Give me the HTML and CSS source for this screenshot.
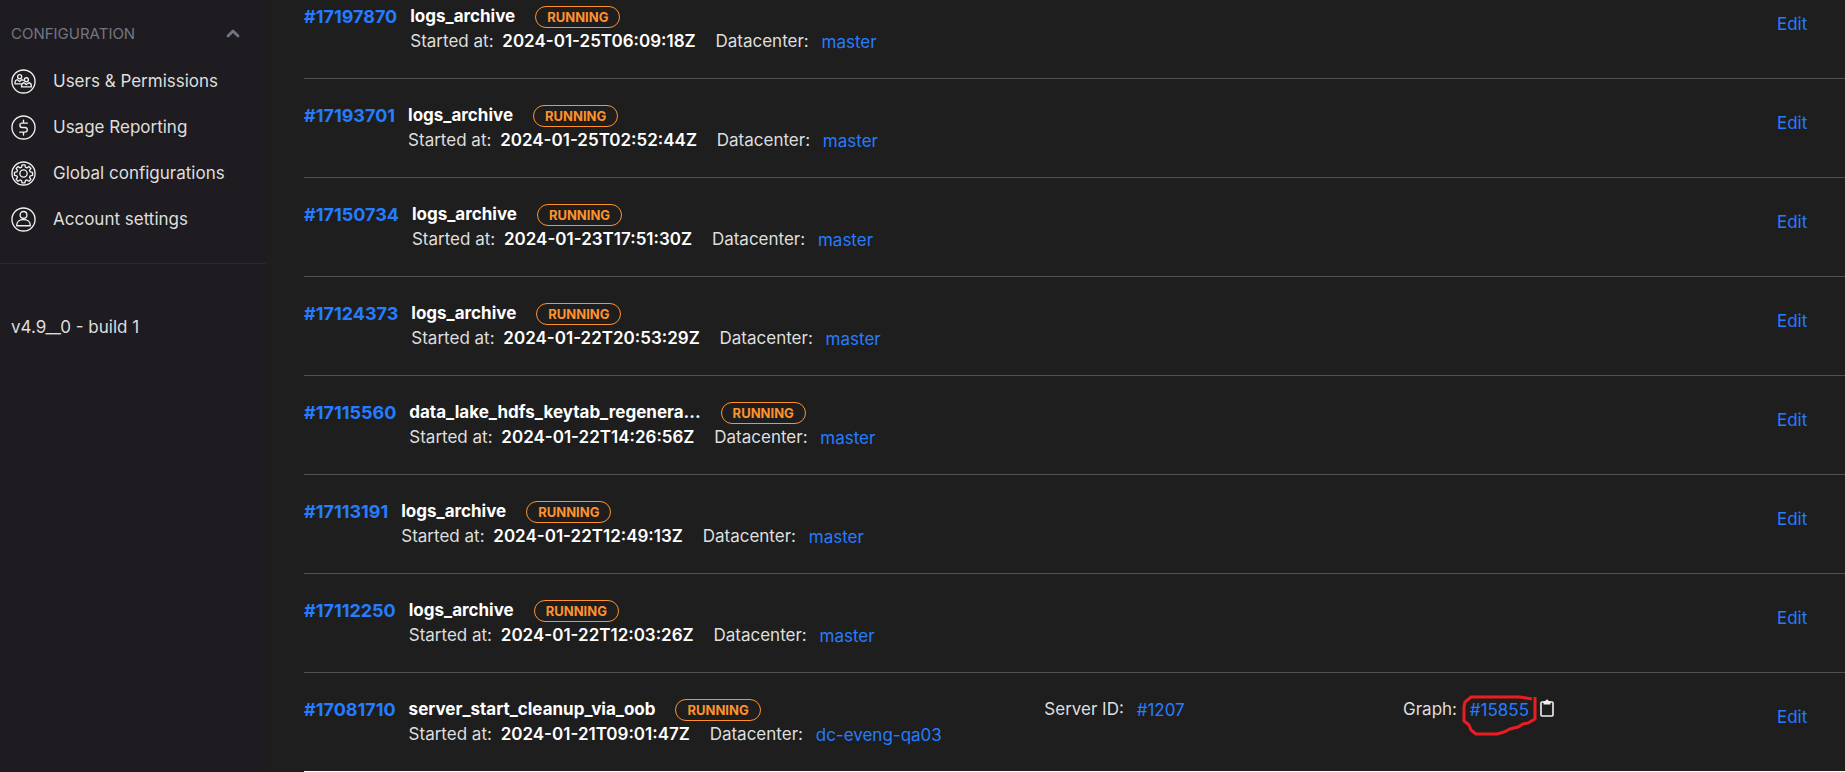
FILE: index.html
```
<!DOCTYPE html>
<html lang="en">
<head>
  <meta charset="utf-8">
  <title>Jobs</title>
  <link rel="stylesheet" href="styles.css">
</head>
<body>
  <aside class="sidebar">
    <button class="section-toggle" type="button">
      <span>CONFIGURATION</span>
      <svg width="14" height="9" viewBox="0 0 14 9"><path d="M2 7l5-5 5 5" fill="none" stroke="currentColor" stroke-width="2.8" stroke-linecap="round" stroke-linejoin="round"/></svg>
    </button>
    <nav class="menu">
      <a href="#">
        <svg class="icon" viewBox="0 0 26 26">
          <circle cx="13" cy="13" r="12"/>
          <circle cx="9" cy="8" r="2.1"/>
          <path d="M10.5 15.5H4.2v-1.7c0-1.500.8-2.300 2.200-2.700L9 13l2.200-1.900 1.500.8"/>
          <circle cx="16" cy="11.200" r="2.100"/>
          <path d="M11 18.600V17c0-1.500.8-2.300 2.300-2.700L16 16.200l2.600-1.900c1.600.4 2.500 1.200 2.500 2.700v1.600z"/>
        </svg>
        Users &amp; Permissions
      </a>
      <a href="#">
        <svg class="icon" viewBox="0 0 26 26">
          <circle cx="13" cy="13" r="12"/>
          <path d="M17 8.500h-5.500a2.250 2.250 0 0 0 0 4.500h3a2.400 2.400 0 0 1 0 4.800H9M13 5.500v3M13 17.800v3"/>
        </svg>
        Usage Reporting
      </a>
      <a href="#">
        <svg class="icon" viewBox="0 0 26 26">
          <circle cx="13" cy="13" r="12"/>
          <circle cx="13" cy="13" r="3.800"/>
          <path d="M11.500 4h3l.5 2.400 1.600.7 2.100-1.400 2 2-1.400 2.100.7 1.600 2.400.5v3l-2.400.5-.7 1.600 1.400 2.100-2 2-2.100-1.400-1.600.7-.5 2.400h-3l-.5-2.400-1.600-.7-2.100 1.400-2-2 1.400-2.100-.7-1.600-2.400-.5v-3l2.400-.5.7-1.600-1.400-2.100 2-2 2.100 1.400 1.600-.7z"/>
        </svg>
        Global configurations
      </a>
      <a href="#">
        <svg class="icon" viewBox="0 0 26 26">
          <circle cx="13" cy="13" r="12"/>
          <circle cx="13" cy="8.200" r="3.500"/>
          <path d="M6 19.500v-1c0-3.300 3-5.500 7-5.500s7 2.200 7 5.500v1z"/>
        </svg>
        Account settings
      </a>
    </nav>
    <p class="version">v4.9__0 - build 1</p>
  </aside>

  <main class="jobs">
    <article class="job">
      <div class="job-main">
        <a class="job-id" href="#">#17197870</a>
        <div>
          <div class="job-title"><strong>logs_archive</strong><span class="badge">RUNNING</span></div>
          <div class="job-meta">Started at: <b>2024-01-25T06:09:18Z</b> <span>Datacenter:</span> <a href="#">master</a></div>
        </div>
      </div>
      <a class="edit" href="#">Edit</a>
    </article>
    <article class="job">
      <div class="job-main">
        <a class="job-id" href="#">#17193701</a>
        <div>
          <div class="job-title"><strong>logs_archive</strong><span class="badge">RUNNING</span></div>
          <div class="job-meta">Started at: <b>2024-01-25T02:52:44Z</b> <span>Datacenter:</span> <a href="#">master</a></div>
        </div>
      </div>
      <a class="edit" href="#">Edit</a>
    </article>
    <article class="job">
      <div class="job-main">
        <a class="job-id" href="#">#17150734</a>
        <div>
          <div class="job-title"><strong>logs_archive</strong><span class="badge">RUNNING</span></div>
          <div class="job-meta">Started at: <b>2024-01-23T17:51:30Z</b> <span>Datacenter:</span> <a href="#">master</a></div>
        </div>
      </div>
      <a class="edit" href="#">Edit</a>
    </article>
    <article class="job">
      <div class="job-main">
        <a class="job-id" href="#">#17124373</a>
        <div>
          <div class="job-title"><strong>logs_archive</strong><span class="badge">RUNNING</span></div>
          <div class="job-meta">Started at: <b>2024-01-22T20:53:29Z</b> <span>Datacenter:</span> <a href="#">master</a></div>
        </div>
      </div>
      <a class="edit" href="#">Edit</a>
    </article>
    <article class="job">
      <div class="job-main">
        <a class="job-id" href="#">#17115560</a>
        <div>
          <div class="job-title"><strong>data_lake_hdfs_keytab_regenera...</strong><span class="badge">RUNNING</span></div>
          <div class="job-meta">Started at: <b>2024-01-22T14:26:56Z</b> <span>Datacenter:</span> <a href="#">master</a></div>
        </div>
      </div>
      <a class="edit" href="#">Edit</a>
    </article>
    <article class="job">
      <div class="job-main">
        <a class="job-id" href="#">#17113191</a>
        <div>
          <div class="job-title"><strong>logs_archive</strong><span class="badge">RUNNING</span></div>
          <div class="job-meta">Started at: <b>2024-01-22T12:49:13Z</b> <span>Datacenter:</span> <a href="#">master</a></div>
        </div>
      </div>
      <a class="edit" href="#">Edit</a>
    </article>
    <article class="job">
      <div class="job-main">
        <a class="job-id" href="#">#17112250</a>
        <div>
          <div class="job-title"><strong>logs_archive</strong><span class="badge">RUNNING</span></div>
          <div class="job-meta">Started at: <b>2024-01-22T12:03:26Z</b> <span>Datacenter:</span> <a href="#">master</a></div>
        </div>
      </div>
      <a class="edit" href="#">Edit</a>
    </article>
    <article class="job">
      <div class="job-main">
        <a class="job-id" href="#">#17081710</a>
        <div>
          <div class="job-title"><strong>server_start_cleanup_via_oob</strong><span class="badge">RUNNING</span></div>
          <div class="job-meta">Started at: <b>2024-01-21T09:01:47Z</b> <span>Datacenter:</span> <a href="#">dc-eveng-qa03</a></div>
        </div>
      </div>
      <div class="job-ref">Server ID: <a href="#">#1207</a></div>
      <div class="job-ref">
        Graph:
        <span class="marked">
          <a href="#">#15855</a>
          <svg class="marker" width="76" height="42" viewBox="0 0 76 42"><path d="M70 4L64 3 58 2H9L3 7 2 12v14l5 4 2 5 5 4h21l7-2 6-3 8-2 5-3 5-1 7-4V2"/></svg>
        </span>
        <button class="copy" type="button" aria-label="Copy graph ID">
          <svg width="14" height="18" viewBox="0 0 14 18"><rect x="1" y="3" width="12" height="14" rx="1" fill="none" stroke="currentColor" stroke-width="1.600"/><path d="M3.500 2H5.500a1.500 1.500 0 0 1 3 0h2v3.500h-7z" fill="currentColor"/></svg>
        </button>
      </div>
      <a class="edit" href="#">Edit</a>
    </article>
  </main>
</body>
</html>
```
FILE: styles.css
```
* {
  box-sizing: border-box;
}

body {
  margin: 0;
  min-height: 100vh;
  display: flex;
  background-color: #1e1e1e;
  color: #dedede;
  font-family: Inter, sans-serif;
  font-size: 17px;
  line-height: 25px;
}

a {
  color: #257cff;
  text-decoration: none;
}

button {
  background: none;
  border: 0;
  padding: 0;
  font: inherit;
  cursor: pointer;
}

/* sidebar */
.sidebar {
  flex: 0 0 266px;
  background-color: #1e1c21;
}

.section-toggle {
  width: 100%;
  display: flex;
  justify-content: space-between;
  align-items: center;
  padding: 21px 26px 0 11px;
  color: #737680;
  font-size: 15px;
}

.menu {
  display: flex;
  flex-direction: column;
  gap: 20px;
  padding: 22px 11px 31px;
  border-bottom: 1px solid #2a292e;
}

.menu a {
  display: flex;
  align-items: center;
  gap: 17px;
  height: 26px;
  color: #dedede;
}

.icon {
  width: 25px;
  height: 25px;
  fill: none;
  stroke: #f0f0f0;
  stroke-width: 1.4;
  stroke-linejoin: round;
  stroke-linecap: round;
}

.version {
  margin: 51px 11px 0;
}

/* job list */
.jobs {
  flex: 1;
  padding-left: 38px;
}

.job {
  display: grid;
  grid-template-columns: 97fr 47fr 49fr 68px;
  height: 99px;
  padding-top: 24px;
  border-bottom: 1px solid #505050;
}

.job:first-child {
  height: 79px;
  padding-top: 4px;
}

.job:last-child {
  border-color: #fff;
}

.job-main {
  display: flex;
  gap: 13px;
}

.job-id {
  font-size: 18px;
  font-weight: 700;
}

.job-title {
  display: flex;
  align-items: center;
  gap: 20px;
  color: #fff;
}

.job-title strong {
  font-weight: 700;
}

.badge {
  height: 22px;
  padding: 0 11px;
  border: 1px solid #ff922b;
  border-radius: 11px;
  color: #ff922b;
  font-size: 13px;
  font-weight: 700;
  line-height: 21px;
}

.job-meta b {
  margin: 0 15px 0 4px;
  color: #fff;
  font-weight: 600;
}

.job-meta a,
.job-ref a {
  margin-left: 8px;
  vertical-align: -1px;
}

.edit {
  grid-column: 4;
  padding-top: 8px;
}

.marked {
  position: relative;
}

.marker {
  position: absolute;
  left: 0;
  top: -4px;
  fill: none;
  stroke: #ed1c24;
  stroke-width: 3;
  pointer-events: none;
}

.copy {
  margin-left: 6px;
  color: #f0f0f0;
  vertical-align: -2px;
}

.copy svg {
  display: block;
}
```
